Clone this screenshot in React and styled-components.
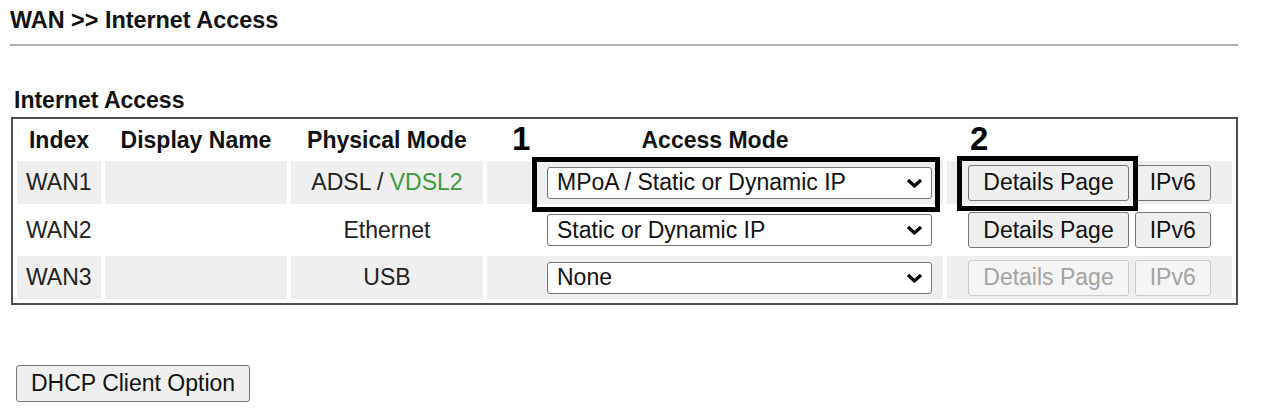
import React from 'react'
import styled, { createGlobalStyle } from 'styled-components'

const GlobalStyle = createGlobalStyle`
  body {
    margin: 0;
    background: #fff;
    font-family: "Liberation Sans", Arial, sans-serif;
    color: #111;
  }
`

const Page = styled.div`
  padding: 7px 0 0 10px;
`

const Title = styled.h1`
  margin: 0;
  font-size: 23.4px;
  line-height: 26px;
  font-weight: bold;
  color: #111;
`

const Rule = styled.hr`
  margin: 11px 0 0;
  width: 1228px;
  height: 0;
  border: 0;
  border-top: 2px solid #b3b3b3;
`

const SectionTitle = styled.h2`
  margin: 41px 0 0 4px;
  font-size: 23px;
  line-height: 26px;
  font-weight: bold;
  color: #111;
`

const TableWrap = styled.div`
  position: relative;
  margin: 4px 0 0 1px;
  width: 1227px;
`

const Table = styled.table`
  width: 1227px;
  table-layout: fixed;
  border-collapse: separate;
  border-spacing: 4px;
  border: 2px solid #4d4d4d;
  background: #fff;
  font-size: 23px;
`

const HeadCell = styled.th`
  box-sizing: border-box;
  width: ${props => props.w}px;
  height: 34px;
  padding: 0;
  font-weight: bold;
  text-align: center;
  color: #111;
`

const Row = styled.tr`
  td {
    background: ${props => props.shaded ? '#efefef' : '#fff'};
  }
`

const Cell = styled.td`
  box-sizing: border-box;
  height: ${props => props.h}px;
  padding: 0 0 0 ${props => props.pad || 0}px;
  text-align: ${props => props.align || 'center'};
  vertical-align: middle;
  color: #222;
  white-space: nowrap;
`

const Green = styled.span`
  color: #3a9a3e;
`

const Select = styled.div`
  box-sizing: border-box;
  display: flex;
  align-items: center;
  justify-content: space-between;
  width: 385px;
  height: 32px;
  padding: 0 8px 0 9px;
  border: 1px solid #767676;
  border-radius: 3px;
  background: #fff;
  color: #111;
  font-size: 23px;
`

const ButtonGroup = styled.div`
  display: flex;
  justify-content: center;
  gap: 6px;
`

const Button = styled.button`
  box-sizing: border-box;
  height: ${props => props.h || 36}px;
  padding: 0 ${props => props.px || 14}px;
  border: 1px solid ${props => props.disabled ? '#cbcbcb' : '#767676'};
  border-radius: 3px;
  background: ${props => props.disabled ? '#f5f5f5' : '#efefef'};
  color: ${props => props.disabled ? '#a3a3a3' : '#111'};
  font-family: "Liberation Sans", Arial, sans-serif;
  font-size: 23px;
  line-height: 1;
`

const Marker = styled.div`
  position: absolute;
  left: ${props => props.x}px;
  top: ${props => props.y}px;
  width: ${props => props.w}px;
  height: ${props => props.h}px;
  box-sizing: border-box;
  border: 5px solid #000;
  pointer-events: none;
`

const MarkerLabel = styled.span`
  position: absolute;
  left: ${props => props.x}px;
  top: 5px;
  font-size: 33px;
  line-height: 33px;
  font-weight: bold;
  color: #000;
`

const Footer = styled.div`
  margin: 60px 0 0 6px;
`

const Chevron = () => (
  <svg width="17" height="10" viewBox="0 0 17 10">
    <polyline points="2,2 8.5,8 15,2" fill="none" stroke="#000" strokeWidth="3.2" />
  </svg>
)

const rows = [
  { index: 'WAN1', mode: <>ADSL / <Green>VDSL2</Green></>, access: 'MPoA / Static or Dynamic IP', enabled: true, h: 43 },
  { index: 'WAN2', mode: 'Ethernet', access: 'Static or Dynamic IP', enabled: true, h: 44 },
  { index: 'WAN3', mode: 'USB', access: 'None', enabled: false, h: 43 }
]

export default function App () {
  return (
    <Page>
      <GlobalStyle />
      <Title>WAN &gt;&gt; Internet Access</Title>
      <Rule />
      <SectionTitle>Internet Access</SectionTitle>
      <TableWrap>
        <Table>
          <thead>
            <tr>
              <HeadCell w={84}>Index</HeadCell>
              <HeadCell w={182}>Display Name</HeadCell>
              <HeadCell w={192}>Physical Mode</HeadCell>
              <HeadCell w={456}>Access Mode</HeadCell>
              <HeadCell w={285}></HeadCell>
            </tr>
          </thead>
          <tbody>
            {rows.map((row, i) => (
              <Row key={row.index} shaded={i % 2 === 0}>
                <Cell h={row.h} align='left' pad={9}>{row.index}</Cell>
                <Cell h={row.h}></Cell>
                <Cell h={row.h}>{row.mode}</Cell>
                <Cell h={row.h} align='left' pad={60}>
                  <Select>
                    <span>{row.access}</span>
                    <Chevron />
                  </Select>
                </Cell>
                <Cell h={row.h}>
                  <ButtonGroup>
                    <Button disabled={!row.enabled}>Details Page</Button>
                    <Button disabled={!row.enabled}>IPv6</Button>
                  </ButtonGroup>
                </Cell>
              </Row>
            ))}
          </tbody>
        </Table>
        <MarkerLabel x={501}>1</MarkerLabel>
        <MarkerLabel x={959}>2</MarkerLabel>
        <Marker x={521} y={40} w={408} h={55} />
        <Marker x={946} y={39} w={181} h={55} />
      </TableWrap>
      <Footer>
        <Button h={37} px={14}>DHCP Client Option</Button>
      </Footer>
    </Page>
  )
}
